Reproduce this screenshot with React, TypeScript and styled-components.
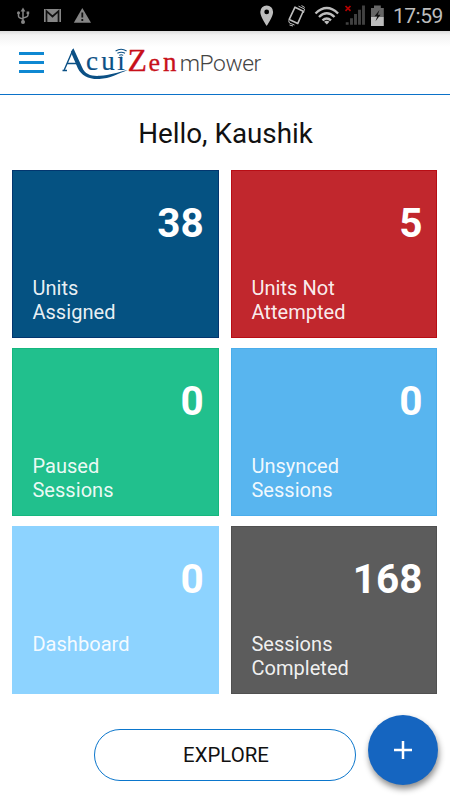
import React from 'react';
import styled, { createGlobalStyle } from 'styled-components';

const GlobalStyle = createGlobalStyle`
  * { box-sizing: border-box; }
  body { margin: 0; background: #fff; font-family: Roboto, sans-serif; }
`;

const Screen = styled.div`
  width: 450px;
  height: 800px;
  display: flex;
  flex-direction: column;
  background: #fff;
  overflow: hidden;
`;

const StatusBar = styled.div`
  height: 31px;
  flex: none;
  background: #000;
  display: flex;
  justify-content: space-between;
`;

const Clock = styled.span`
  font-size: 21px;
  line-height: 32px;
  letter-spacing: -0.5px;
  color: #bdbdbd;
  width: 57px;
  white-space: nowrap;
`;

const Header = styled.header`
  height: 64px;
  flex: none;
  display: flex;
  align-items: flex-start;
  padding: 21px 0 0 19px;
  border-bottom: 1.5px solid #0b72c9;
  background: linear-gradient(#dcdcdc, #f3f3f3 4px, #fff 16px);
`;

const MenuButton = styled.button`
  display: flex;
  flex-direction: column;
  gap: 6px;
  width: 25px;
  padding: 0;
  border: 0;
  background: none;
`;

const MenuLine = styled.span`
  height: 3px;
  background: #0f88d2;
`;

const LogoDrawing = styled.svg`
  display: block;
  margin: -9px 0 0 16px;
  overflow: visible;
`;

const Greeting = styled.h1`
  margin: 0;
  height: 75px;
  line-height: 77px;
  padding-left: 1px;
  flex: none;
  text-align: center;
  font-size: 27.8px;
  font-weight: 400;
  color: #111;
`;

const Tiles = styled.main`
  display: grid;
  grid-template-columns: 206.4px 206px;
  grid-auto-rows: 168px;
  gap: 10.2px 12.6px;
  padding-left: 12.4px;
`;

const Tile = styled.section<{ $color: string; $edge: string }>`
  background: ${(p) => p.$color};
  border: 1px solid ${(p) => p.$edge};
  padding: 31px 14px 0 19px;
  color: #fff;
`;

const Count = styled.div`
  font-size: 40.5px;
  line-height: 43px;
  font-weight: 700;
  text-align: right;
`;

const Label = styled.div`
  margin-top: 30.6px;
  font-size: 20px;
  line-height: 24px;
  letter-spacing: 0.05px;
  white-space: pre-line;
  color: rgba(255, 255, 255, 0.93);
`;

const Footer = styled.footer`
  display: flex;
  align-items: flex-start;
  gap: 11.5px;
  padding: 21px 0 0 94px;
`;

const ExploreButton = styled.button`
  width: 262px;
  height: 52px;
  margin-top: 14px;
  padding: 0 0 0 2px;
  border: 1px solid #0b76cc;
  border-radius: 26px;
  background: #fff;
  font: 400 20.4px Roboto, sans-serif;
  color: #111;
`;

const AddButton = styled.button`
  width: 70px;
  height: 70px;
  padding: 0;
  border: 0;
  border-radius: 50%;
  background: #1565c0;
  display: grid;
  place-items: center;
  box-shadow: 1px 4px 6px rgba(0, 0, 0, 0.45);
`;

const StatusIcons = () => (
  <svg width="100" height="31" viewBox="0 0 100 31" fill="none" stroke="#858585">
    <path d="M23 10v12M18.5 13v3q0 2 4.5 3M28 13v2q0 2-5 3" strokeWidth="1.5" />
    <path d="M23 7.5l2.4 4h-4.8z" fill="#858585" stroke="none" />
    <circle cx="23" cy="22" r="2" fill="#858585" stroke="none" />
    <circle cx="18.5" cy="12.8" r="1.5" fill="#858585" stroke="none" />
    <path d="M26.6 11.5h2.6v2.6h-2.6z" fill="#858585" stroke="none" />
    <path d="M44 9h17v13H44z" fill="#858585" stroke="none" />
    <path d="M46.5 22V11.2l6 5.3 6-5.3V22" stroke="#111" strokeWidth="1.7" />
    <path d="M82.3 8L91 22.7H73.8z" fill="#858585" stroke="none" />
    <path d="M82.3 12.6v5M82.3 19v2" stroke="#111" strokeWidth="1.8" />
  </svg>
);

const SignalIcons = () => (
  <svg width="140" height="31" viewBox="250 0 140 31" fill="none" stroke="#bdbdbd">
    <path fillRule="evenodd" d="M266.7 5.5a6.4 6.4 0 0 1 6.4 6.4c0 4.7-6.4 14-6.4 14s-6.4-9.3-6.4-14a6.4 6.4 0 0 1 6.4-6.4zm0 4a2.4 2.4 0 1 0 0 4.8 2.4 2.4 0 0 0 0-4.8z" fill="#bdbdbd" stroke="none" />
    <path d="M295 7.2l8.2 4-5.4 12.2-8.6-4z" strokeWidth="1.6" strokeLinejoin="round" />
    <path d="M298.5 6.2l6 2.8-1 4M301.5 5.5l3.3 2M288.5 20.5l1 2.5 5 2M289.5 25l3.5 1" strokeWidth="1" />
    <path d="M315.5 13.5q11.3-11 22.6 0M319 17q7.800-7.500 15.500 0M322.500 20.300q4.200-3.800 8.500 0" strokeWidth="2.4" />
    <path d="M326.8 24.4l-2.7-2.6q2.7-2 5.4 0z" fill="#bdbdbd" stroke="none" />
    <path d="M347.2 24.8v-2.6M351.5 24.8v-6.5M355.5 24.8V14M359.5 24.8V9.8M363.500 24.800V5.500" stroke="#414141" strokeWidth="2.9" />
    <path d="M345.5 6l5 4.8M350.5 6l-5 4.8" stroke="#b50000" strokeWidth="1.7" />
    <path d="M371 8h3V5.500h6.800V8h3v9H371z" fill="#666" stroke="none" />
    <path d="M371 17h12.800v9H371z" fill="#bdbdbd" stroke="none" />
    <path d="M379.500 10l-5 6.200h2.800l-1.800 5 5-6.400h-2.700z" fill="#111" stroke="none" />
  </svg>
);

const StatusRight = styled.div`
  display: flex;
  gap: 3px;
`;

const Logo = () => (
  <LogoDrawing width="205" height="44" viewBox="60 43 205 44" role="img" aria-label="AcuiZen mPower">
    <g fill="#0b5085" stroke="#0b5085" strokeWidth=".2" fontFamily="'Liberation Serif', serif" fontSize="27">
      <text x="86" y="70.3">c</text>
      <text x="101.3" y="70.3">u</text>
      <text x="117.3" y="70.3">ı</text>
    </g>
    <g fill="none" stroke="#0b5085">
      <path d="M64 70.5l9-20.8M67 63.5h11M62.5 70.5h4.5" strokeWidth="1.4" />
      <path d="M115.6 51q5.5-3.4 11 0M117.4 53.3q3.8-2.2 7.6 0M119.2 55.4q2-1.2 4 0" strokeWidth="1.1" />
    </g>
    <path d="M73.4 48.3l8.8 19.2c3 7.2 9.3 8.8 17.600 8.300 10-.6 18-3.600 28-5.800-9.500 3.600-18 8.500-28.500 9-10.500.5-18-3.600-21.500-10.800L70.800 52z" fill="#0b5085" />
    <circle cx="121.2" cy="57.7" r="1.1" fill="#0b5085" />
    <g fill="#c8101a" stroke="#c8101a" strokeWidth=".3" fontFamily="'Liberation Serif', serif">
      <text x="127.5" y="70.5" fontSize="32.5" textLength="19.500" lengthAdjust="spacingAndGlyphs">Z</text>
      <text x="148.5" y="70.5" fontSize="26">e</text>
      <text x="163" y="70.5" fontSize="27">n</text>
    </g>
    <text x="179.8" y="70.7" fontSize="22.8" fontWeight="300" fill="#444" fontFamily="Roboto, sans-serif" textLength="81.5">mPower</text>
  </LogoDrawing>
);

const tiles = [
  { count: 38, label: 'Units\nAssigned', color: '#055282', edge: '#03366f' },
  { count: 5, label: 'Units Not\nAttempted', color: '#c1272d', edge: '#b80d14' },
  { count: 0, label: 'Paused\nSessions', color: '#21c08d', edge: '#15b77e' },
  { count: 0, label: 'Unsynced\nSessions', color: '#58b5ef', edge: '#4badeb' },
  { count: 0, label: 'Dashboard', color: '#8dd3ff', edge: '#8dd3ff' },
  { count: 168, label: 'Sessions\nCompleted', color: '#5c5c5c', edge: '#505050' },
];

export default function App() {
  return (
    <>
      <GlobalStyle />
      <Screen>
        <StatusBar>
          <StatusIcons />
          <StatusRight>
            <SignalIcons />
            <Clock>17:59</Clock>
          </StatusRight>
        </StatusBar>
        <Header>
          <MenuButton aria-label="Menu">
            <MenuLine />
            <MenuLine />
            <MenuLine />
          </MenuButton>
          <Logo />
        </Header>
        <Greeting>Hello, Kaushik</Greeting>
        <Tiles>
          {tiles.map((tile) => (
            <Tile key={tile.label} $color={tile.color} $edge={tile.edge}>
              <Count>{tile.count}</Count>
              <Label>{tile.label}</Label>
            </Tile>
          ))}
        </Tiles>
        <Footer>
          <ExploreButton>EXPLORE</ExploreButton>
          <AddButton aria-label="Add">
            <svg width="20" height="20" viewBox="0 0 20 20">
              <path d="M10 1v18M1 10h18" stroke="#fff" strokeWidth="2.5" />
            </svg>
          </AddButton>
        </Footer>
      </Screen>
    </>
  );
}
